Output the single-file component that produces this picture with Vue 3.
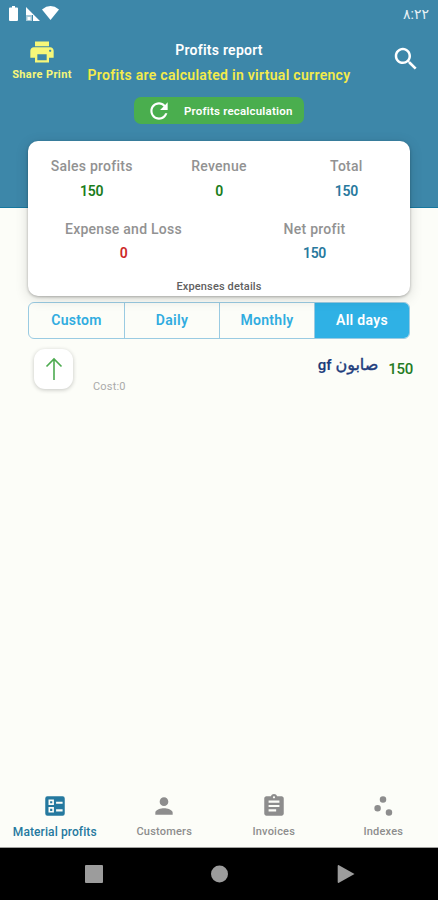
<template>
  <div class="screen">
    <header class="header">
      <div class="status-bar">
        <div class="status-icons">
          <svg class="battery" viewBox="0 0 9 15"><path d="M3 0h3v1.500h2q1 0 1 1V14q0 1-1 1H1q-1 0-1-1V2.500q0-1 1-1h2z" /></svg>
          <svg class="signal" viewBox="0 0 14 14"><path d="M0 0l14 14H7V8H0z" /><path class="dim" d="M0 8h6v6H0z" /><path d="M1.500 10h3v3h-3z" /></svg>
          <svg class="wifi" viewBox="0 0 17 14"><path d="M0 3.400Q8.500-3.200 17 3.400L8.500 14z" /></svg>
        </div>
        <span class="clock">٨:٢٢</span>
      </div>

      <div class="toolbar">
        <button class="print">
          <svg viewBox="0 0 24 24"><path d="M19 8H5c-1.660 0-3 1.340-3 3v6h4v4h12v-4h4v-6c0-1.660-1.340-3-3-3zm-3 11H8v-5h8v5zm3-7c-.55 0-1-.45-1-1s.45-1 1-1 1 .45 1 1-.45 1-1 1zm-1-9H6v4h12V3z" /></svg>
          <span>Share Print</span>
        </button>
        <div class="titles">
          <h1>Profits report</h1>
          <p>Profits are calculated in virtual currency</p>
          <button class="recalc">
            <svg viewBox="0 0 24 24"><path d="M17.650 6.350C16.200 4.900 14.210 4 12 4c-4.420 0-7.990 3.580-7.990 8s3.570 8 7.990 8c3.730 0 6.840-2.550 7.730-6h-2.080c-.82 2.330-3.040 4-5.650 4-3.310 0-6-2.690-6-6s2.690-6 6-6c1.660 0 3.140.69 4.220 1.780L13 11h7V4l-2.350 2.350z" /></svg>
            <span>Profits recalculation</span>
          </button>
        </div>
        <button class="search">
          <svg viewBox="0 0 24 24"><path d="M15.500 14h-.79l-.28-.27C15.410 12.590 16 11.110 16 9.500 16 5.910 13.090 3 9.500 3S3 5.910 3 9.500 5.910 16 9.500 16c1.610 0 3.090-.59 4.230-1.570l.27.28v.79l5 4.990L20.490 19l-4.990-5zm-6 0C7.010 14 5 11.990 5 9.500S7.010 5 9.500 5 14 7.010 14 9.500 11.990 14 9.500 14z" /></svg>
        </button>
      </div>
    </header>

    <main class="content">
      <section class="summary">
        <div class="summary-row">
          <div v-for="item in totals" :key="item.label" class="stat">
            <span class="label">{{ item.label }}</span>
            <span class="value" :class="item.tone">{{ item.value }}</span>
          </div>
        </div>
        <div class="summary-row second">
          <div v-for="item in balance" :key="item.label" class="stat">
            <span class="label">{{ item.label }}</span>
            <span class="value" :class="item.tone">{{ item.value }}</span>
          </div>
        </div>
        <a class="details">Expenses details</a>
      </section>

      <div class="periods">
        <button
          v-for="period in periods"
          :key="period"
          :class="{ active: period === selectedPeriod }"
          @click="selectedPeriod = period"
        >{{ period }}</button>
      </div>

      <div class="item">
        <div class="arrow">
          <svg viewBox="0 0 18 24"><path d="M9 23V2M1.500 9.500L9 2l7.500 7.500" /></svg>
        </div>
        <span class="cost">Cost:0</span>
        <span class="name" dir="rtl"><span class="arabic">صابون</span> gf</span>
        <span class="amount">150</span>
      </div>
    </main>

    <nav class="tabs">
      <button
        v-for="tab in tabs"
        :key="tab.label"
        :class="{ active: tab.label === selectedTab }"
        @click="selectedTab = tab.label"
      >
        <svg viewBox="0 0 24 24"><path fill-rule="evenodd" :d="tab.icon" /></svg>
        <span>{{ tab.label }}</span>
      </button>
    </nav>

    <div class="system-bar">
      <svg viewBox="0 0 18 18"><rect width="18" height="18" rx="1" /></svg>
      <svg viewBox="0 0 18 18"><circle cx="8.500" cy="9" r="8.500" /></svg>
      <svg viewBox="0 0 18 18"><path d="M1.500 0L17.500 9l-16 9q-.8 0-.8-1V1q0-1 .8-1z" /></svg>
    </div>
  </div>
</template>

<script setup>
import { ref } from 'vue'

const totals = [
  { label: 'Sales profits', value: 150, tone: 'green' },
  { label: 'Revenue', value: 0, tone: 'green' },
  { label: 'Total', value: 150, tone: 'blue' }
]

const balance = [
  { label: 'Expense and Loss', value: 0, tone: 'red' },
  { label: 'Net profit', value: 150, tone: 'blue' }
]

const periods = ['Custom', 'Daily', 'Monthly', 'All days']
const selectedPeriod = ref('All days')

const tabs = [
  {
    label: 'Material profits',
    icon: 'M19 3H5a2 2 0 0 0-2 2v14a2 2 0 0 0 2 2h14a2 2 0 0 0 2-2V5a2 2 0 0 0-2-2zM6 6h5v5H6zm1.500 1.500v2h2v-2zM13 8h6v2h-6zM6 13h5v5H6zm1.500 1.500v2h2v-2zM13 15h6v2h-6z'
  },
  {
    label: 'Customers',
    icon: 'M12 12c2.210 0 4-1.790 4-4s-1.790-4-4-4-4 1.790-4 4 1.790 4 4 4zm0 2c-2.670 0-8 1.340-8 4v2h16v-2c0-2.660-5.330-4-8-4z'
  },
  {
    label: 'Invoices',
    icon: 'M19 3h-4.180C14.400 1.840 13.300 1 12 1c-1.300 0-2.400.84-2.820 2H5c-1.100 0-2 .9-2 2v14c0 1.100.9 2 2 2h14c1.100 0 2-.9 2-2V5c0-1.100-.9-2-2-2zm-7 0c.55 0 1 .45 1 1s-.45 1-1 1-1-.45-1-1 .45-1 1-1zm2 14H7v-2h7v2zm3-4H7v-2h10v2zm0-4H7V7h10v2z'
  },
  {
    label: 'Indexes',
    icon: 'M7 11a3 3 0 1 0 0 6a3 3 0 1 0 0-6zM12 3a3 3 0 1 0 0 6a3 3 0 1 0 0-6zM17.500 15a3 3 0 1 0 0 6a3 3 0 1 0 0-6z'
  }
]
const selectedTab = ref('Material profits')
</script>

<style>
body {
  background: #fcfdf8;
}
</style>

<style scoped>
.screen {
  display: flex;
  flex-direction: column;
  width: 438px;
  height: 900px;
  overflow: hidden;
  background: #fcfdf8;
  font-family: Roboto, "Noto Sans", "DejaVu Sans", sans-serif;
  font-weight: 500;
}

button {
  padding: 0;
  border: 0;
  background: none;
  font: inherit;
  letter-spacing: inherit;
  color: inherit;
}

svg {
  display: block;
  flex: none;
  fill: currentColor;
}

.header {
  flex: none;
  box-sizing: border-box;
  height: 208px;
  background: #3d87a9;
  border-bottom: 1px solid #16789f;
  color: #fff;
}

.status-bar {
  display: flex;
  justify-content: space-between;
  height: 28px;
  padding: 0 9px;
}

.status-icons {
  display: flex;
  padding-top: 6px;
}

.battery {
  width: 9px;
  height: 15px;
}

.signal {
  width: 14px;
  height: 14px;
  margin: 1px 2px 0 8px;
}

.signal .dim {
  opacity: .55;
}

.wifi {
  width: 17px;
  height: 14px;
}

.clock {
  padding-top: 5px;
  font-size: 14px;
  line-height: 18px;
  font-weight: 400;
  color: #e6f1f6;
}

.toolbar {
  display: grid;
  grid-template-columns: 84px 270px 84px;
}

.print {
  display: flex;
  flex-direction: column;
  align-items: center;
  gap: 2px;
  height: 60px;
  padding-top: 10px;
  color: #f7f779;
  font-size: 11px;
  line-height: 14px;
  font-weight: 700;
  letter-spacing: .4px;
}

.print svg {
  width: 28px;
  height: 28px;
}

.titles {
  display: flex;
  flex-direction: column;
  align-items: center;
}

h1,
p {
  margin: 0;
  white-space: nowrap;
}

h1 {
  padding-top: 12px;
  font-size: 14px;
  line-height: 20px;
  font-weight: 600;
  letter-spacing: .25px;
}

p {
  margin-top: 5px;
  color: #f3eb4b;
  font-size: 14px;
  line-height: 20px;
  font-weight: 600;
  letter-spacing: .3px;
}

.recalc {
  display: flex;
  align-items: center;
  box-sizing: border-box;
  width: 170px;
  height: 27px;
  margin-top: 12px;
  padding-left: 12px;
  gap: 12px;
  border-radius: 7px;
  background: #4aae4e;
  font-size: 11.5px;
  font-weight: 600;
  letter-spacing: .2px;
  white-space: nowrap;
}

.recalc svg {
  width: 26px;
  height: 26px;
}

.search {
  align-self: start;
  margin: 16px 0 0 37px;
}

.search svg {
  width: 30px;
  height: 30px;
}

.content {
  flex: 1;
  margin-top: -67px;
  padding: 0 28px;
}

.summary {
  position: relative;
  display: flex;
  flex-direction: column;
  box-sizing: border-box;
  height: 155px;
  padding-top: 15px;
  border-radius: 10px;
  background: #fff;
  box-shadow: 0 1px 3px rgba(0, 0, 0, .28), 0 3px 14px rgba(0, 0, 0, .14);
}

.summary-row {
  display: grid;
  grid-template-columns: repeat(3, 1fr);
  height: 63px;
}

.summary-row.second {
  grid-template-columns: repeat(2, 1fr);
  height: 59px;
}

.stat {
  display: flex;
  flex-direction: column;
  align-items: center;
  gap: 5px;
}

.second .stat {
  gap: 4px;
}

.label {
  color: #929292;
  font-size: 14px;
  line-height: 20px;
  letter-spacing: .25px;
}

.value {
  font-size: 14px;
  line-height: 20px;
  font-weight: 600;
  letter-spacing: -.3px;
}

.green {
  color: #1b7d1b;
}

.blue {
  color: #29799e;
}

.red {
  color: #cd2929;
}

.details {
  align-self: center;
  color: #5f5f5f;
  font-size: 11px;
  line-height: 18px;
  letter-spacing: .15px;
}

.periods {
  display: grid;
  grid-template-columns: repeat(4, 1fr);
  box-sizing: border-box;
  height: 37px;
  margin-top: 6px;
  overflow: hidden;
  border: 1px solid #9acbe2;
  border-radius: 6px;
  color: #31ace0;
  font-size: 14px;
  font-weight: 600;
  letter-spacing: .3px;
}

.periods button {
  padding-bottom: 2px;
}

.periods button + button {
  border-left: 1px solid #9acbe2;
}

.periods .active {
  background: #2fb1e5;
  color: #fff;
}

.item {
  display: flex;
  align-items: flex-start;
  height: 70px;
  padding: 10px 0 0 6px;
  margin-right: -3px;
}

.arrow {
  display: grid;
  place-items: center;
  width: 39px;
  height: 40px;
  border-radius: 11px;
  background: #fff;
  box-shadow: 0 1px 4px rgba(0, 0, 0, .22);
}

.arrow svg {
  width: 18px;
  height: 24px;
  fill: none;
  stroke: #4dab50;
  stroke-width: 1.6;
}

.cost {
  margin: 30px 0 0 20px;
  color: #aaa;
  font-size: 11px;
  line-height: 16px;
  font-weight: 400;
  letter-spacing: .2px;
}

.name {
  margin: 6px 10px 0 auto;
  color: #213c7c;
  font-size: 15px;
  line-height: 20px;
  font-weight: 600;
}

.name .arabic {
  font-size: 16px;
  font-weight: 500;
  -webkit-text-stroke: .4px currentColor;
}

.amount {
  margin-top: 10px;
  color: #247b24;
  font-size: 15px;
  line-height: 20px;
  letter-spacing: -.3px;
}

.tabs {
  display: grid;
  grid-template-columns: repeat(4, 1fr);
  height: 56px;
  padding-bottom: 1px;
  color: #8d8d8d;
  font-size: 11px;
  letter-spacing: .2px;
}

.tabs button {
  display: flex;
  flex-direction: column;
  align-items: center;
  gap: 6px;
  padding-top: 3px;
  line-height: 14px;
  white-space: nowrap;
}

.tabs svg {
  width: 26px;
  height: 26px;
}

.tabs .active {
  color: #25799f;
}

.tabs .active span {
  font-size: 12px;
  letter-spacing: .1px;
}

.system-bar {
  display: flex;
  align-items: center;
  justify-content: space-between;
  flex: none;
  box-sizing: border-box;
  height: 53px;
  padding: 0 83px 0 85px;
  border-top: 1px solid #a1a19f;
  background: #000;
  color: #9c9c9c;
}

.system-bar svg {
  width: 18px;
  height: 18px;
}
</style>
